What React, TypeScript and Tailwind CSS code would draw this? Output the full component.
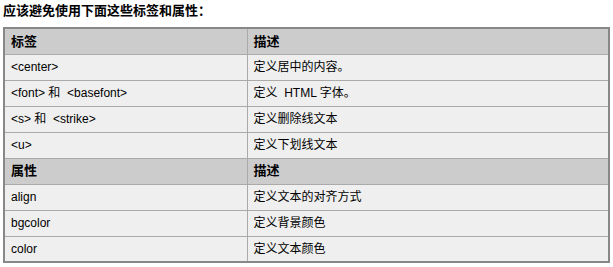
import React from "react";

const tags: [string, string][] = [
  ["<center>", "定义居中的内容。"],
  ["<font> 和  <basefont>", "定义  HTML 字体。"],
  ["<s> 和  <strike>", "定义删除线文本"],
  ["<u>", "定义下划线文本"],
];

const attrs: [string, string][] = [
  ["align", "定义文本的对齐方式"],
  ["bgcolor", "定义背景颜色"],
  ["color", "定义文本颜色"],
];

const font = { fontFamily: '"Liberation Sans", Arial, "Noto Sans CJK SC", sans-serif' };

function HeadRow({ a, b }: { a: string; b: string }) {
  return (
    <tr className="h-[26px]">
      <th className="border border-[#aaa] bg-[#cccccc] pl-[6px] text-left text-[13px] font-bold text-black">{a}</th>
      <th className="border border-[#aaa] bg-[#cccccc] pl-[6px] text-left text-[13px] font-bold text-black">{b}</th>
    </tr>
  );
}

function BodyRow({ a, b }: { a: string; b: string }) {
  return (
    <tr className="h-[26px]">
      <td className="border border-[#aaa] bg-[#efefef] pl-[6px] text-[12px] text-black whitespace-pre">{a}</td>
      <td className="border border-[#aaa] bg-[#efefef] pl-[6px] text-[12px] text-black whitespace-pre">{b}</td>
    </tr>
  );
}

export default function App() {
  return (
    <div className="w-[613px] h-[267px] bg-white pl-[3px] pt-[2px]" style={font}>
      <h3 className="text-[13px] font-bold leading-[17px] text-black">应该避免使用下面这些标签和属性：</h3>
      <table className="mt-[8px] w-[607px] table-fixed border-collapse border-2 border-[#888]">
        <colgroup>
          <col className="w-[243px]" />
          <col />
        </colgroup>
        <tbody>
          <HeadRow a="标签" b="描述" />
          {tags.map(([a, b]) => <BodyRow key={a} a={a} b={b} />)}
          <HeadRow a="属性" b="描述" />
          {attrs.map(([a, b]) => <BodyRow key={a} a={a} b={b} />)}
        </tbody>
      </table>
    </div>
  );
}
